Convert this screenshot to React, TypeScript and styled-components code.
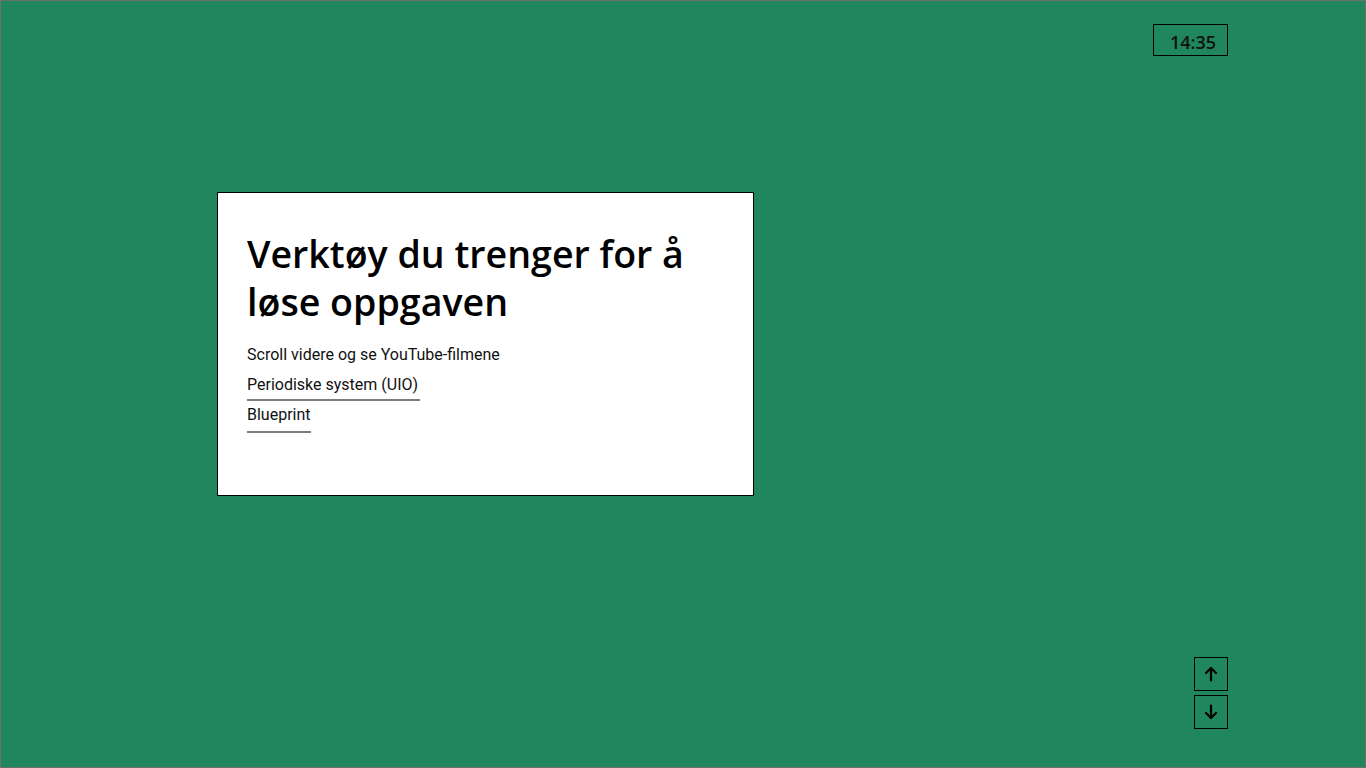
import React from "react";
import styled, { createGlobalStyle } from "styled-components";

const Global = createGlobalStyle`
  html, body { margin: 0; padding: 0; background: #1f875b; }
  * { box-sizing: border-box; }
`;

const Page = styled.div`
  width: 1366px;
  height: 768px;
  border: 1px solid #6f6f6f;
  background: #1f875b;
  display: flex;
  flex-direction: column;
  overflow: hidden;
`;

const Header = styled.div`
  display: flex;
  justify-content: flex-end;
  padding: 23px 137px 0 0;
`;

const Clock = styled.div`
  width: 75px;
  height: 32px;
  border: 1px solid #000;
  font-family: "Open Sans", "Noto Sans", sans-serif;
  font-weight: 600;
  font-size: 18px;
  color: #111;
  display: flex;
  align-items: center;
  padding: 4px 0 0 16px;
`;

const Card = styled.section`
  margin: 136px 0 0 216px;
  width: 537px;
  height: 304px;
  background: #fff;
  border: 1px solid #000;
  padding: 37px 29px 0 29px;
  display: flex;
  flex-direction: column;
`;

const Title = styled.h1`
  margin: 0 0 14px 0;
  font-family: "Open Sans", "Noto Sans", sans-serif;
  font-weight: 600;
  font-size: 37.6px;
  line-height: 48px;
  color: #000;
  max-width: 460px;
`;

const Line = styled.div`
  font-family: Roboto, sans-serif;
  font-size: 16px;
  line-height: 30px;
  color: #111;
  margin-bottom: 2px;
`;

const LinkItem = styled.a<{ $pb?: number; $pr?: number }>`
  align-self: flex-start;
  font-family: Roboto, sans-serif;
  font-size: 16px;
  line-height: 22px;
  color: #111;
  text-decoration: none;
  border-bottom: 2px solid #7d7d7d;
  padding: 2px ${(p) => p.$pr ?? 0}px ${(p) => p.$pb ?? 3}px 0;
  margin-bottom: 1px;
`;

const Footer = styled.div`
  margin-top: auto;
  display: flex;
  flex-direction: column;
  align-items: flex-end;
  gap: 4px;
  padding: 0 137px 38px 0;
`;

const NavButton = styled.button`
  width: 34px;
  height: 34px;
  border: 1px solid #000;
  background: transparent;
  padding: 0;
  display: flex;
  align-items: center;
  justify-content: center;
  color: #000;
`;

const Arrow = ({ down }: { down?: boolean }) => (
  <svg width="16" height="16" viewBox="0 0 16 16" fill="none" stroke="#000" strokeWidth="2.2" strokeLinecap="round" strokeLinejoin="round">
    {down ? (
      <>
        <path d="M8 1.5v12.5" />
        <path d="M3 9l5 5 5-5" />
      </>
    ) : (
      <>
        <path d="M8 14.5V2" />
        <path d="M3 7l5-5 5 5" />
      </>
    )}
  </svg>
);

export default function App() {
  return (
    <>
      <Global />
      <Page>
        <Header>
          <Clock>14:35</Clock>
        </Header>
        <Card>
          <Title>Verktøy du trenger for å løse oppgaven</Title>
          <Line>Scroll videre og se YouTube-filmene</Line>
          <LinkItem href="#" $pr={2}>Periodiske system (UIO)</LinkItem>
          <LinkItem href="#" $pb={5}>Blueprint</LinkItem>
        </Card>
        <Footer>
          <NavButton aria-label="opp"><Arrow /></NavButton>
          <NavButton aria-label="ned"><Arrow down /></NavButton>
        </Footer>
      </Page>
    </>
  );
}
